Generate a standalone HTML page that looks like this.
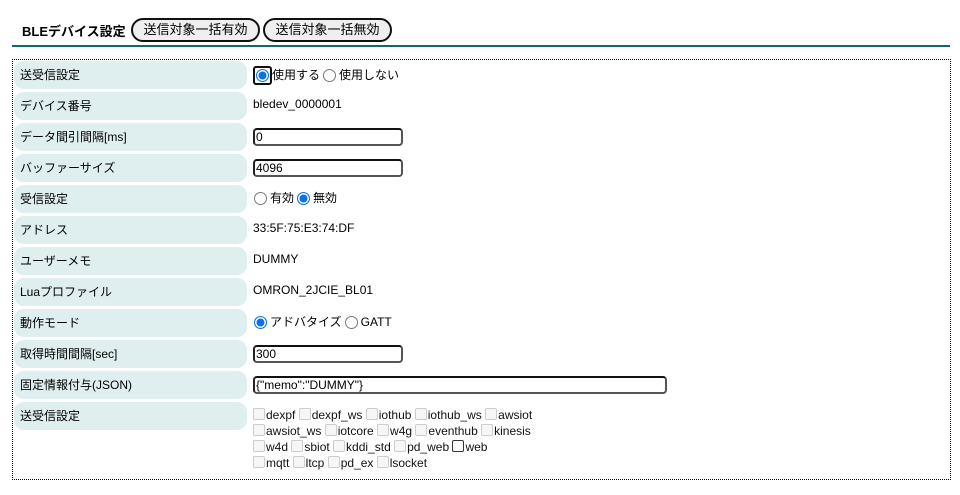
<!DOCTYPE html>
<html><head><meta charset="utf-8"><style>
*{box-sizing:border-box;margin:0;padding:0}
body{width:960px;height:495px;background:#fff;font-family:"Liberation Sans","Noto Sans CJK JP",sans-serif;font-size:12px;color:#000;position:relative;overflow:hidden}
.h{position:absolute;left:22px;top:21px;font-weight:bold;font-size:13px}
.btn{position:absolute;top:18px;height:24px;border:2px solid #111;border-radius:12px;background:#efefef;font-size:13px;line-height:20px;text-align:center}
.line{position:absolute;left:12px;top:45px;width:938px;height:2px;background:#106868}
.box{position:absolute;left:12px;top:59px;width:939px;height:421px;border:1px dotted #000}
.lab{position:absolute;left:14px;width:233px;height:28px;background:#dfeeee;border-radius:10px;padding-left:6px;line-height:28px}
.val{position:absolute;left:253px;height:28px;line-height:28px;display:flex;align-items:center}
.inp{position:absolute;left:253px;height:18px;border:2px solid #555;border-top-color:#111;border-left-color:#222;border-radius:4px;font-size:12px;line-height:14px;padding-left:1px}
.rad{display:inline-block;width:13px;height:13px;border:1px solid #777;border-radius:50%;margin:0 3px 0 1px;vertical-align:middle;background:#fff}
.rad.on{border:1px solid #0a72e8;box-shadow:inset 0 0 0 1.5px #fff;background:#0a72e8}
.cbs{position:absolute;left:253px;top:407px;line-height:16px;font-size:12px;color:#111}
.cb{display:inline-block;width:12px;height:12px;border:1px solid #ccc;border-radius:2px;background:#f6f6f6;vertical-align:-1px;margin-right:1px}
</style></head><body>
<div class="h">BLEデバイス設定</div>
<div class="btn" style="left:131px;width:129px">送信対象一括有効</div>
<div class="btn" style="left:263px;width:129px">送信対象一括無効</div>
<div class="line"></div>
<div class="box"></div>

<div class="lab" style="top:61px">送受信設定</div>
<div class="val" style="top:61px"><span style="display:inline-block;border:2px solid #111;border-radius:3px;padding:1px;line-height:0"><span class="rad on" style="margin:0"></span></span>使用する <span class="rad" style="margin-left:3px"></span>使用しない</div>

<div class="lab" style="top:92px">デバイス番号</div>
<div class="val" style="top:90px">bledev_0000001</div>

<div class="lab" style="top:123px">データ間引間隔[ms]</div>
<div class="inp" style="top:128px;width:150px">0</div>

<div class="lab" style="top:154px">バッファーサイズ</div>
<div class="inp" style="top:159px;width:150px">4096</div>

<div class="lab" style="top:185px">受信設定</div>
<div class="val" style="top:184px"><span class="rad"></span>有効 <span class="rad on" style="margin-left:3px"></span>無効</div>

<div class="lab" style="top:216px">アドレス</div>
<div class="val" style="top:214px">33:5F:75:E3:74:DF</div>

<div class="lab" style="top:247px">ユーザーメモ</div>
<div class="val" style="top:245px">DUMMY</div>

<div class="lab" style="top:278px">Luaプロファイル</div>
<div class="val" style="top:276px">OMRON_2JCIE_BL01</div>

<div class="lab" style="top:309px">動作モード</div>
<div class="val" style="top:308px"><span class="rad on"></span>アドバタイズ <span class="rad" style="margin-left:3px"></span>GATT</div>

<div class="lab" style="top:340px">取得時間間隔[sec]</div>
<div class="inp" style="top:345px;width:150px">300</div>

<div class="lab" style="top:371px">固定情報付与(JSON)</div>
<div class="inp" style="top:376px;width:414px">{"memo":"DUMMY"}</div>

<div class="lab" style="top:402px">送受信設定</div>
<div class="cbs">
<span class="cb"></span>dexpf <span class="cb"></span>dexpf_ws <span class="cb"></span>iothub <span class="cb"></span>iothub_ws <span class="cb"></span>awsiot<br>
<span class="cb"></span>awsiot_ws <span class="cb"></span>iotcore <span class="cb"></span>w4g <span class="cb"></span>eventhub <span class="cb"></span>kinesis<br>
<span class="cb"></span>w4d <span class="cb"></span>sbiot <span class="cb"></span>kddi_std <span class="cb"></span>pd_web <span class="cb" style="border-color:#333;background:#fff"></span>web<br>
<span class="cb"></span>mqtt <span class="cb"></span>ltcp <span class="cb"></span>pd_ex <span class="cb"></span>lsocket
</div>
</body></html>
